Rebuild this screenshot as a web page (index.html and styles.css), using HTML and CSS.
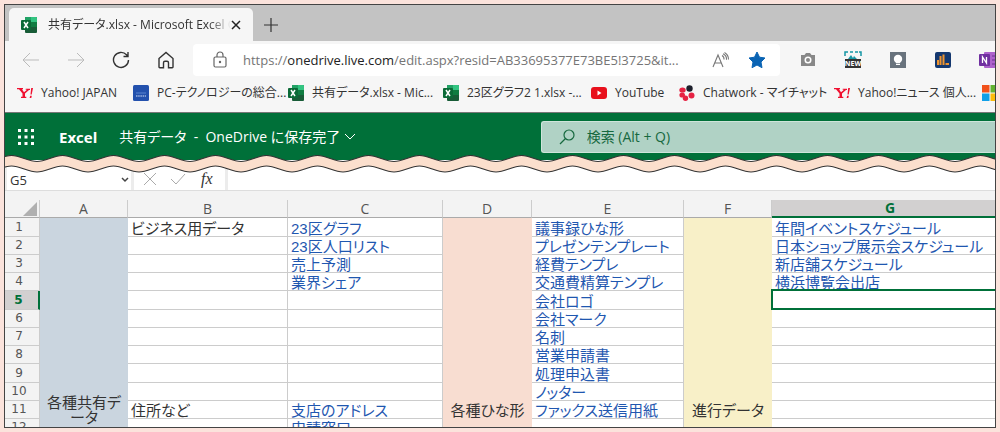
FILE: index.html
```
<!DOCTYPE html>
<html lang="ja">
<head>
<meta charset="utf-8">
<title>共有データ.xlsx - Microsoft Excel Online</title>
<link rel="stylesheet" href="styles.css">
</head>
<body>
<svg class="defs" width="0" height="0" aria-hidden="true">
  <symbol id="xl" viewBox="0 0 16 16">
    <rect x="4" y="0" width="12" height="16" rx="1" fill="#185c37"/>
    <path d="M4 1a1 1 0 0 1 1-1h5v5H4z" fill="#21a366"/>
    <path d="M10 0h5a1 1 0 0 1 1 1v4h-6z" fill="#33c481"/>
    <path d="M10 5h6v5h-6z" fill="#107c41"/>
    <rect x="0" y="3" width="10" height="10" rx="1" fill="#0b6a37"/>
    <path d="M3 5l4 6M7 5l-4 6" stroke="#fff" stroke-width="1.5"/>
  </symbol>
  <symbol id="yj" viewBox="0 0 16 12">
    <path d="M0 1h6v1.300H5l2 3 3-2.500H8.700V1.800H13v1.300h-1L8 6.500V9.700h1.300V11H4V9.700h1.500V6.500L2 2.300H0z" fill="#f01030"/>
    <path d="M14.200 1H16l-1.300 6.500h-1.200zM13.200 8.700h1.600L14.300 11h-1.700z" fill="#f01030"/>
  </symbol>
</svg>
<main class="window">
  <div class="tabs">
    <div class="tab">
      <svg class="icon" aria-hidden="true"><use href="#xl"/></svg>
      <span class="tab-title">共有データ.xlsx - Microsoft Excel O</span>
      <button class="plain" aria-label="タブを閉じる"><svg width="10" height="10"><path d="M1 1l8 8M9 1l-8 8" stroke="#222" stroke-width="1.500"/></svg></button>
    </div>
    <button class="plain new-tab" aria-label="新しいタブ"><svg width="16" height="16"><path d="M8 1v14M1 8h14" stroke="#333" stroke-width="1.200"/></svg></button>
  </div>

  <div class="toolbar">
    <nav class="nav">
      <button class="plain" aria-label="戻る"><svg width="18" height="18" fill="none" stroke="#bbb"><path d="M17 9H1M8 2L1 9l7 7"/></svg></button>
      <button class="plain" aria-label="進む"><svg width="18" height="18" fill="none" stroke="#bbb"><path d="M1 9h16M10 2l7 7-7 7"/></svg></button>
      <button class="plain" aria-label="更新"><svg width="18" height="18" fill="none" stroke="#333" stroke-width="1.400"><path d="M16.500 9A7.500 7.500 0 1 1 14.500 3.800L16 5.500M16 1v4.500h-4.500"/></svg></button>
      <button class="plain" aria-label="ホーム"><svg width="18" height="18" fill="none" stroke="#333" stroke-width="1.400"><path d="M2 7.500L9 1.500l7 6V16a.8.8 0 0 1-.8.8H11.500v-5a1.500 1.500 0 0 0-1.500-1.500H8a1.500 1.500 0 0 0-1.500 1.500v5H2.800A.8.8 0 0 1 2 16z"/></svg></button>
    </nav>
    <div class="address">
      <svg width="14" height="18" fill="none" stroke="#666" stroke-width="1.200"><rect x="1" y="6" width="12" height="10" rx="1.500"/><path d="M4 6V4a3 3 0 0 1 6 0v2"/><circle cx="7" cy="11" r=".6" fill="#666"/></svg>
      <span class="url">https://<b>onedrive.live.com</b>/edit.aspx?resid=AB33695377E73BE5!3725&amp;it...</span>
      <button class="plain" aria-label="音声で読み上げる"><svg width="18" height="16" fill="none" stroke="#777" stroke-width="1.100"><path d="M1 15L6 3l5 12M3 11h6M10 3.500a4 4 0 0 1 2 4M11 1.800a6 6 0 0 1 3.500 6M12.500.5a8 8 0 0 1 4 7"/></svg></button>
      <button class="plain" aria-label="お気に入り"><svg width="18" height="18" viewBox="0 0 18 18"><path d="M9 1l2.500 5.200 5.500.8-4 4 1 5.700L9 14l-5 2.700L5 11 1 7l5.500-.8z" fill="#0a64b4" stroke="#0a64b4" stroke-linejoin="round"/></svg></button>
    </div>
    <div class="extensions">
      <button class="plain" aria-label="カメラ"><svg width="16" height="16"><path d="M1 3h3.500L6 1h4l1.500 2H15v11H1z" fill="#888"/><circle cx="8" cy="8" r="3.500" fill="#fff"/><circle cx="8" cy="8" r="2" fill="#888"/></svg></button>
      <button class="plain" aria-label="スクリーンショット"><svg width="18" height="18"><path d="M1 5V1h3M6 1h3M11 1h3M15 1h2v4" fill="none" stroke="#1697a5" stroke-width="1.500"/><path d="M4 8l3-4 2 3 1-2 3 3z" fill="#1697a5"/><rect x="1" y="8" width="16" height="9" fill="#333"/><text x="9" y="15" class="new-label">NEW</text></svg></button>
      <button class="plain" aria-label="ヒント"><svg width="16" height="16"><rect width="16" height="16" fill="#69737d"/><circle cx="8" cy="7" r="4.200" fill="#fff"/><path d="M6 10h4v3H6z" fill="#fff"/><path d="M6 11.500h4" stroke="#69737d" stroke-width=".7"/></svg></button>
      <button class="plain" aria-label="グラフ"><svg width="16" height="16"><rect width="16" height="16" rx="2" fill="#14386f"/><path d="M2 13V8h2v5zM4.500 13V4h2v9zM7.500 13V2.500h2V13zM10.500 13v-2H14v2z" fill="#ef9530"/></svg></button>
      <button class="plain" aria-label="OneNote"><svg width="18" height="16"><rect x="5" width="12" height="16" rx="1" fill="#ad62cc"/><path d="M13 4h4M13 8h4M13 12h4" stroke="#6b2f91"/><rect y="2" width="11" height="12" rx="1" fill="#7030a0"/><path d="M3.500 11V5l4 6V5" fill="none" stroke="#fff" stroke-width="1.300"/></svg></button>
    </div>
  </div>

  <nav class="bookmarks">
    <a href="#"><svg class="icon" aria-hidden="true"><use href="#yj"/></svg>Yahoo! JAPAN</a>
    <a href="#"><svg class="icon" viewBox="0 0 16 16" aria-hidden="true"><rect width="16" height="16" rx="1.500" fill="#2351ad"/><path d="M3 8h10" stroke="#5b85cf"/><path d="M3 11h10" stroke="#dce6f7" stroke-width="1.200" stroke-dasharray="1.500 .7"/></svg>PC-テクノロジーの総合...</a>
    <a href="#"><svg class="icon" aria-hidden="true"><use href="#xl"/></svg>共有データ.xlsx - Mic...</a>
    <a href="#"><svg class="icon" aria-hidden="true"><use href="#xl"/></svg>23区グラフ2 1.xlsx -...</a>
    <a href="#"><svg class="icon" viewBox="0 0 16 16" aria-hidden="true"><rect y="2" width="16" height="12" rx="3" fill="#e8101c"/><path d="M6.500 5.500v5L10.500 8z" fill="#fff"/></svg>YouTube</a>
    <a href="#"><svg class="icon" viewBox="0 0 16 16" aria-hidden="true"><g fill="#e62243"><ellipse cx="3.500" cy="5" rx="3.200" ry="2.600"/><ellipse cx="3.200" cy="10" rx="2.800" ry="2.600"/><circle cx="6.500" cy="13.200" r="2.700"/><circle cx="12.500" cy="10.500" r="3"/></g><circle cx="10.500" cy="3.500" r="3.200" fill="#1d1f2b"/></svg>Chatwork - マイチャット</a>
    <a href="#"><svg class="icon" aria-hidden="true"><use href="#yj"/></svg>Yahoo!ニュース 個人...</a>
    <a href="#" aria-label="Microsoft"><svg class="icon" viewBox="0 0 16 16" aria-hidden="true"><path d="M0 0h7.500v7.500H0z" fill="#f1511b"/><path d="M8.500 0H16v7.500H8.500z" fill="#62b22f"/><path d="M0 8.500h7.500V16H0z" fill="#10a0e8"/><path d="M8.500 8.500H16V16H8.500z" fill="#fbbc09"/></svg></a>
  </nav>

  <header class="app-bar">
    <button class="plain" aria-label="アプリ起動ツール"><svg width="16" height="16" fill="#fff"><path d="M0 0h3v3H0zM6.500 0h3v3h-3zM13 0h3v3h-3zM0 6.500h3v3H0zM6.500 6.500h3v3h-3zM13 6.500h3v3h-3zM0 13h3v3H0zM6.500 13h3v3h-3zM13 13h3v3h-3z"/></svg></button>
    <strong class="brand">Excel</strong>
    <button class="plain doc-title">共有データ&nbsp; - &nbsp;OneDrive に保存完了<svg width="12" height="8" fill="none" stroke="#fff"><path d="M1 1l5 5 5-5"/></svg></button>
    <label class="search">
      <svg width="16" height="16" fill="none" stroke="#17693f" stroke-width="1.200"><circle cx="10" cy="6" r="5"/><path d="M6.500 9.500L1 15"/></svg>
      <input type="search" placeholder="検索 (Alt + Q)" aria-label="検索">
    </label>
  </header>

  <svg class="tear" aria-hidden="true">
    <defs><pattern id="wave" x="-19" width="51" height="18" patternUnits="userSpaceOnUse">
      <path d="M-1 6.500H0C9 6.500 16.500.5 25.500.5S42 6.500 51 6.500h1V17h-1C42 17 34.500 11 25.500 11S9 17 0 17h-1z" fill="#fbdfcd" stroke="#333" stroke-width="1.200"/>
    </pattern></defs>
    <rect width="100%" height="18" fill="url(#wave)"/>
  </svg>

  <div class="formula-bar">
    <label class="name-box"><input value="G5" aria-label="名前ボックス"><svg width="8" height="6" fill="none" stroke="#444" stroke-width="1.500"><path d="M1 1l3 3 3-3"/></svg></label>
    <div class="formula-actions">
      <button class="plain" aria-label="キャンセル"><svg width="14" height="14" stroke="#aaa"><path d="M1 1l12 12M13 1L1 13"/></svg></button>
      <button class="plain" aria-label="入力"><svg width="16" height="14" fill="none" stroke="#aaa"><path d="M1 7l5 5L15 2"/></svg></button>
      <button class="plain fx" aria-label="関数の挿入">fx</button>
    </div>
    <input class="formula" aria-label="数式バー">
  </div>

  <div class="sheet">
    <table>
      <colgroup><col class="c-num"><col class="c-a"><col class="c-b"><col class="c-c"><col class="c-d"><col class="c-e"><col class="c-f"><col></colgroup>
      <thead>
        <tr><th class="corner"><svg width="14" height="14"><path d="M14 0v14H0z" fill="#b0b0b0"/></svg></th><th>A</th><th>B</th><th>C</th><th>D</th><th>E</th><th>F</th><th class="active">G</th></tr>
      </thead>
      <tbody>
        <tr><th>1</th><td class="group blue" rowspan="12">各種共有データ</td><td>ビジネス用データ</td><td><a href="#">23区グラフ</a></td><td class="group pink" rowspan="12">各種ひな形</td><td><a href="#">議事録ひな形</a></td><td class="group yellow" rowspan="12">進行データ</td><td><a href="#">年間イベントスケジュール</a></td></tr>
        <tr><th>2</th><td></td><td><a href="#">23区人口リスト</a></td><td><a href="#">プレゼンテンプレート</a></td><td><a href="#">日本ショップ展示会スケジュール</a></td></tr>
        <tr><th>3</th><td></td><td><a href="#">売上予測</a></td><td><a href="#">経費テンプレ</a></td><td><a href="#">新店舗スケジュール</a></td></tr>
        <tr><th>4</th><td></td><td><a href="#">業界シェア</a></td><td><a href="#">交通費精算テンプレ</a></td><td><a href="#">横浜博覧会出店</a></td></tr>
        <tr><th class="active">5</th><td></td><td></td><td><a href="#">会社ロゴ</a></td><td class="selected"></td></tr>
        <tr><th>6</th><td></td><td></td><td><a href="#">会社マーク</a></td><td></td></tr>
        <tr><th>7</th><td></td><td></td><td><a href="#">名刺</a></td><td></td></tr>
        <tr><th>8</th><td></td><td></td><td><a href="#">営業申請書</a></td><td></td></tr>
        <tr><th>9</th><td></td><td></td><td><a href="#">処理申込書</a></td><td></td></tr>
        <tr><th>10</th><td></td><td></td><td><a href="#">ノッター</a></td><td></td></tr>
        <tr><th>11</th><td>住所など</td><td><a href="#">支店のアドレス</a></td><td><a href="#">ファックス送信用紙</a></td><td></td></tr>
        <tr><th>12</th><td></td><td><a href="#">申請窓口</a></td><td></td><td></td></tr>
      </tbody>
    </table>
  </div>
</main>
</body>
</html>
```
FILE: styles.css
```
* { box-sizing: border-box; }
body {
  margin: 0;
  padding: 4px;
  height: 100vh;
  background: #fbe3dc;
  color: #333;
  font: 12px/18px "Open Sans", "Noto Sans CJK JP", sans-serif;
  font-feature-settings: "palt";
}
.defs { position: absolute; }
.window {
  height: 100%;
  border: 1px solid #444;
  background: #f6f6f6;
  overflow: hidden;
  display: flex;
  flex-direction: column;
}
.window > * { flex: none; }
a { color: inherit; text-decoration: none; }
svg { display: block; flex: none; }
input { font: inherit; color: inherit; border: 0; padding: 0; background: none; min-width: 0; outline: 0; }
.plain { border: 0; padding: 0; background: none; font: inherit; color: inherit; display: flex; align-items: center; justify-content: center; }
.icon { width: 16px; height: 16px; }

.tabs { display: flex; height: 36px; padding: 3px 4px 0; background: #c3c3c3; }
.tab { display: flex; align-items: center; width: 244px; padding: 0 12px; background: #f6f6f6; border-radius: 5px 5px 0 0; }
.tab-title {
  flex: 1;
  margin-left: 11px;
  overflow: hidden;
  white-space: nowrap;
  -webkit-mask-image: linear-gradient(to right, #000 88%, transparent);
  mask-image: linear-gradient(to right, #000 88%, transparent);
}
.new-tab { width: 36px; }

.toolbar { display: flex; align-items: center; height: 37px; padding-left: 3px; }
.nav { display: flex; width: 185px; }
.nav button { width: 45px; }
.address { flex: 1; display: flex; align-items: center; height: 32px; padding: 0 14px 0 20px; background: #fff; border-radius: 4px; font-size: 13px; color: #757575; }
.url { flex: 1; margin-left: 16px; overflow: hidden; white-space: nowrap; }
.url b { font-weight: 400; color: #222; }
.address button + button { margin-left: 18px; }
.extensions { display: flex; width: 215px; padding-left: 5px; }
.extensions button { width: 45px; flex: none; }
.new-label { font: 700 7px "Open Sans", sans-serif; fill: #fff; text-anchor: middle; }

.bookmarks { display: grid; grid-template-columns: 116px 155px 155px 148px 88px 155px 148px 16px; height: 34px; padding: 0 0 4px 12px; align-items: center; white-space: nowrap; overflow: hidden; }
.bookmarks a { display: flex; align-items: center; gap: 8px; }

.app-bar { display: flex; height: 48px; padding: 0 0 0 13px; background: #007039; border-top: 1px solid #777; color: #fff; align-items: center; font-size: 14px; }
.brand { margin-left: 25px; font-size: 15px; }
.doc-title { margin-left: 22px; gap: 4px; white-space: nowrap; }
.search { display: flex; flex: none; width: 46.5%; height: 32px; margin-left: auto; padding-left: 17px; gap: 12px; align-items: center; background: #b0d2c5; border: 1px solid #cfe5db; border-right: 0; border-radius: 3px 0 0 3px; }
.search input { flex: 1; }
.search input::placeholder { color: #17693f; opacity: 1; }

.tear { position: relative; width: 100%; height: 18px; margin: -5px 0 -13px; }

.formula-bar { display: flex; gap: 3px; height: 31px; padding-left: 2px; background: #ececec; border-bottom: 1px solid #ddd; }
.formula-bar > * { background: #fff; }
.name-box { display: flex; width: 124px; padding: 9px 2px 0 3px; align-items: center; font-size: 13px; }
.name-box input { flex: 1; }
.formula-actions { display: flex; width: 91px; padding: 8px 4px 0 2px; }
.formula-actions button { flex: 1; }
.fx { font: italic 16px "Liberation Serif", serif; }
.formula { flex: 1; }

.sheet { padding-top: 9px; background: #f3f3f3; }
table { width: calc(100% + 14px); table-layout: fixed; border-collapse: separate; border-spacing: 0; }
.c-num { width: 35px; }
.c-a, .c-f { width: 88px; }
.c-b { width: 160px; }
.c-c { width: 155px; }
.c-d { width: 89px; }
.c-e { width: 152px; }
tr { height: 18px; }
tbody tr:nth-child(4n+1) { height: 19px; }
th { padding: 0; font-weight: 400; line-height: 17px; color: #555; background: #f3f3f3; border: solid #ccc; border-width: 0 1px 1px 0; }
thead th { font-size: 14px; border-bottom-color: #aaa; }
tbody th { font: 12px/17px "DejaVu Sans", sans-serif; padding-right: 6px; }
.corner svg { margin: 1px 2px 1px auto; }
thead .active { font-weight: 700; color: #007039; background: #d2d0d0; border-bottom: 2px solid #007039; line-height: 16px; }
tbody .active { font-weight: 700; color: #007039; background: #d2d0d0; border-right: 2px solid #007039; }
td { padding: 2px 0 0 3px; background: #fff; border: solid #ccc; border-width: 0 1px 1px 0; font: 15px/15px "Liberation Sans", "Noto Sans CJK JP", sans-serif; font-feature-settings: "palt"; white-space: nowrap; }
td a { color: #1f57b0; }
.group { padding: 0 5px 19px; border: 0; vertical-align: bottom; text-align: center; }
.blue { background: #cad5df; white-space: normal; line-break: anywhere; padding-bottom: 12px; }
.pink { background: #f8ddd1; }
.yellow { background: #f8f0c8; }
.selected { position: relative; }
.selected::after { content: ""; position: absolute; inset: -2px -4px -1px -1px; border: 2px solid #007039; }
```
